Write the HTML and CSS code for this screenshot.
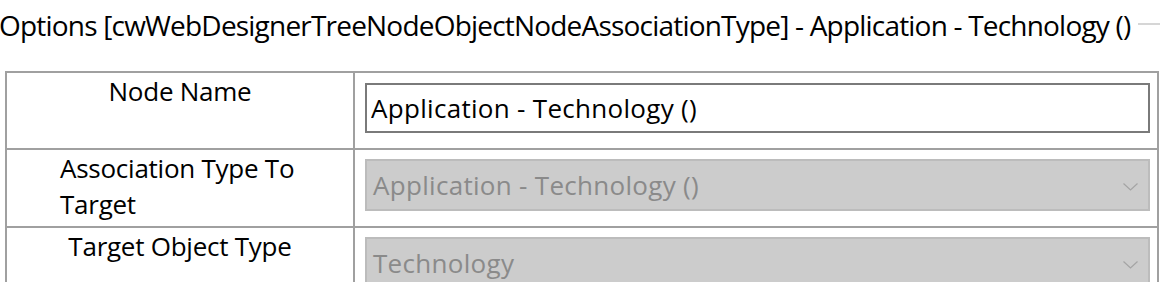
FILE: index.html
```html
<!DOCTYPE HTML>
<html lang="en">
<head>
    <meta charset="UTF-8">
    <title>Options</title>
    <link rel="stylesheet" href="styles.css">
</head>
<body>

<div class="options">
    <div class="optionsTitle">
        <span class="legend">Options [cwWebDesignerTreeNodeObjectNodeAssociationType] - Application - Technology ()</span>
        <span class="rule"></span>
    </div>

    <table class="grid">
        <tr>
            <td class="labelCell"><span class="label">Node Name</span></td>
            <td class="fieldCell"><input class="textInput" type="text" value="Application - Technology ()"></td>
        </tr>
        <tr>
            <td class="labelCell"><span class="label">Association Type To Target</span></td>
            <td class="fieldCell">
                <div class="select disabled">
                    <span class="selectText">Application - Technology ()</span>
                    <svg class="chevron" width="15" height="8" viewBox="0 0 15 8"><path d="M0.5 0.5 L7.5 7 L14.5 0.5" fill="none" stroke="#a4a4a4" stroke-width="1.2"/></svg>
                </div>
            </td>
        </tr>
        <tr>
            <td class="labelCell"><span class="label">Target Object Type</span></td>
            <td class="fieldCell">
                <div class="select disabled">
                    <span class="selectText">Technology</span>
                    <svg class="chevron" width="15" height="8" viewBox="0 0 15 8"><path d="M0.5 0.5 L7.5 7 L14.5 0.5" fill="none" stroke="#a4a4a4" stroke-width="1.2"/></svg>
                </div>
            </td>
        </tr>
    </table>
</div>

</body>
</html>
```

FILE: styles.css
```css
html, body {
    margin: 0;
    padding: 0;
    background: #fff;
    overflow: hidden;
}
body {
    font-family: "Open Sans", "Liberation Sans", sans-serif;
    color: #000;
}
.optionsTitle {
    display: flex;
    align-items: center;
    height: 50px;
    margin-top: 0;
}
.legend {
    font-size: 28px;
    letter-spacing: -0.8px;
    white-space: nowrap;
    line-height: 50px;
    margin-left: -1px;
}
.rule {
    flex: 1;
    height: 0;
    margin-left: 8px;
    margin-top: -2px;
    border-top: 2px solid #d6d6d6;
}
.grid {
    border-collapse: collapse;
    margin: 21px 0 0 5px;
    width: 1154px;
}
.grid td {
    border: 2px solid #a0a0a0;
    vertical-align: top;
}
.labelCell {
    width: 346px;
    padding: 0;
    text-align: center;
}
.label {
    display: inline-block;
    max-width: 240px;
    text-align: left;
    font-size: 26px;
    line-height: 36px;
    letter-spacing: -0.25px;
}
.fieldCell {
    padding: 9px 7px 15px 10px;
}
.textInput {
    display: block;
    box-sizing: border-box;
    width: 100%;
    height: 50px;
    margin: 1px 0 0 0;
    padding: 0 5px 0 4px;
    border: 2px solid #7a7a7a;
    font-family: "Open Sans", "Liberation Sans", sans-serif;
    font-size: 26px;
    letter-spacing: 0.3px;
    color: #000;
    outline: none;
}
.select {
    display: flex;
    align-items: center;
    box-sizing: border-box;
    height: 52px;
    padding: 0 10px 0 6px;
    border: 2px solid #bcbcbc;
    background: #cccccc;
}
.selectText {
    flex: 1;
    font-size: 26px;
    letter-spacing: 0.3px;
    color: #8a8a8a;
    white-space: nowrap;
}
.chevron {
    display: block;
    margin-top: 4px;
}
```
